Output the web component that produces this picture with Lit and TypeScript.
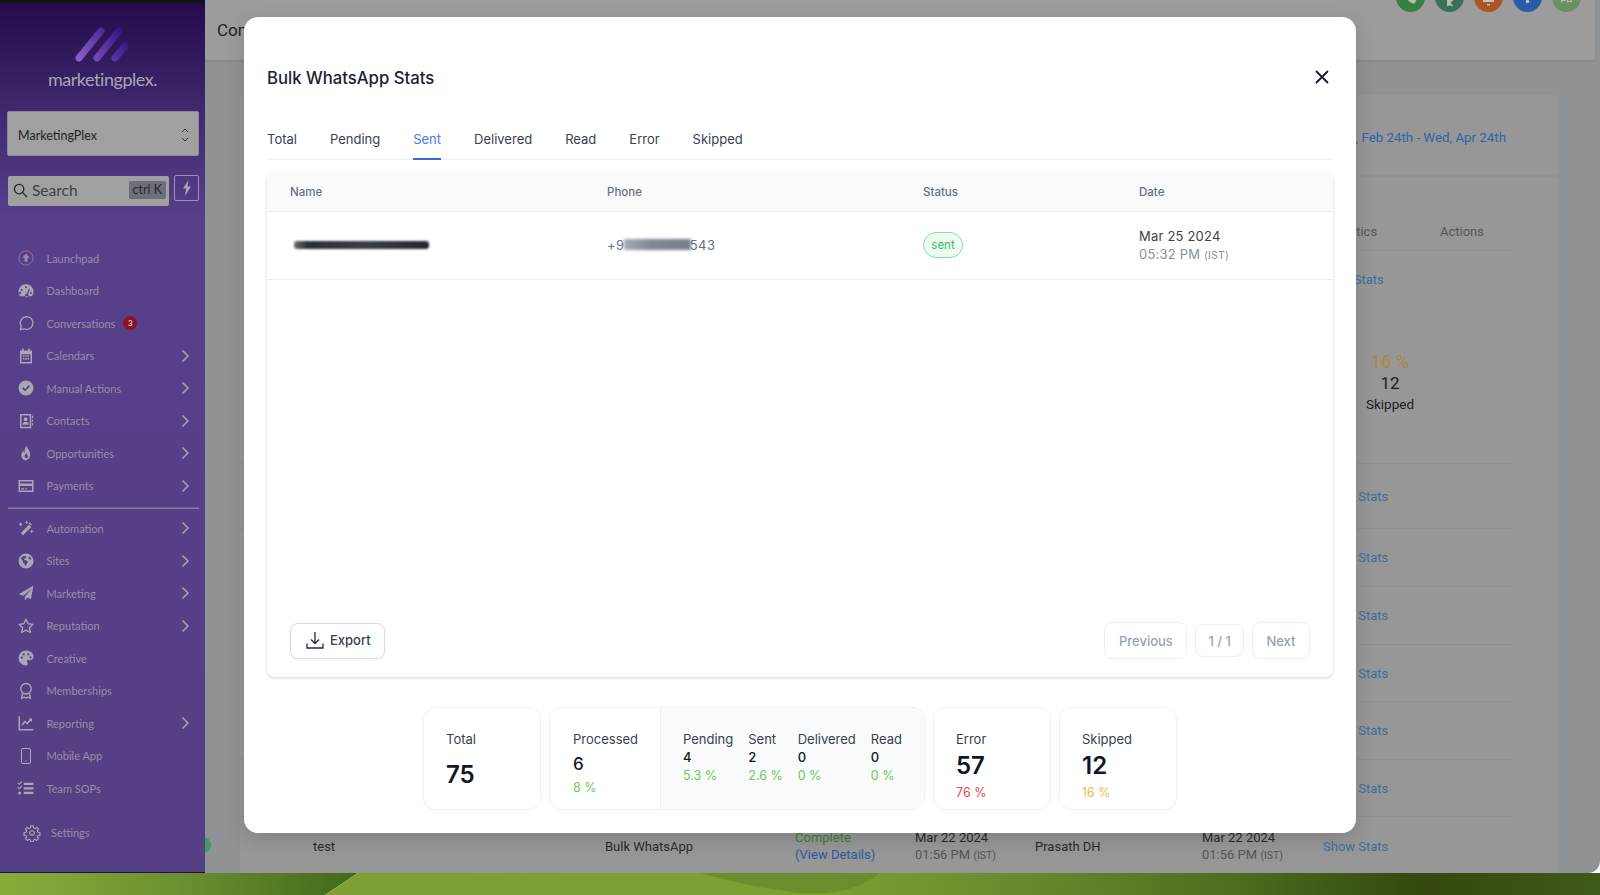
import { LitElement, html, css, svg } from 'lit';
import { customElement } from 'lit/decorators.js';

// filled / stroked glyphs for the sidebar, all in a 24 box
const icons: Record<string, unknown> = {
  launchpad: svg`<circle cx="12" cy="12" r="9.5" fill="none" stroke="currentColor" stroke-width="1.2" opacity=".6"/><path d="M12 2.5a9.5 9.5 0 0 1 8 4.5" fill="none" stroke="#a8553f" stroke-width="1.4"/><path d="M12 6l5 5.5h-3V17h-4v-5.5H7z" fill="currentColor" opacity=".75"/>`,
  dashboard: svg`<path fill-rule="evenodd" d="M12 3a10 10 0 0 0-8.6 15.1c.3.5.9.9 1.5.9h14.2c.6 0 1.2-.4 1.5-.9A10 10 0 0 0 12 3zm0 2.6a1.4 1.4 0 1 1 0 2.8 1.4 1.4 0 0 1 0-2.8zM6.4 9.2a1.4 1.4 0 1 1 0 2.8 1.4 1.4 0 0 1 0-2.8zm-1 5.5a1.4 1.4 0 1 1 0-.1zm10.500-5.600l1.500.600-2.900 6.700a2.300 2.300 0 1 1-1.500-.600zM18.600 16a1.400 1.400 0 1 1 0-2.800 1.400 1.400 0 0 1 0 2.800z" fill="currentColor"/>`,
  chat: svg`<path d="M13 3.500a8.500 8.500 0 0 0-7.400 12.700L4.300 20.800l4.800-1.100A8.500 8.500 0 1 0 13 3.500z" fill="none" stroke="currentColor" stroke-width="1.700" stroke-linejoin="round"/>`,
  calendar: svg`<path fill-rule="evenodd" d="M7 2h2v2.500h6V2h2v2.500h3v17.500H4V4.500h3zM6 9.500V20h12V9.500zM8 11h2v2H8zm3 0h2v2h-2zm3 0h2v2h-2zm-6 3.500h2v2H8zm3 0h2v2h-2zm3 0h2v2h-2z" fill="currentColor"/>`,
  check: svg`<path fill-rule="evenodd" d="M12 2a10 10 0 1 0 0 20 10 10 0 0 0 0-20zm5.300 7.600l-6.300 6.800-4.200-3.900 1.500-1.600 2.600 2.400 4.800-5.200z" fill="currentColor"/>`,
  contacts: svg`<path fill-rule="evenodd" d="M4 2.500h15v19H4zM6 4.500v15h11v-15zm5.500 2.500a2.700 2.700 0 1 1 0 5.400 2.700 2.700 0 0 1 0-5.400zM7.500 17v-1.500c0-1.600 1.800-2.300 4-2.300s4 .7 4 2.300V17zM20 5h1.500v3H20zm0 5h1.500v3H20zm0 5h1.500v3H20z" fill="currentColor"/>`,
  flame: svg`<path fill-rule="evenodd" d="M12.500 2c.5 3.500 5 6.500 5 12a6 7.500 0 0 1-11.500 3c-1-3.500 1-6 2.500-8 .2 1.300.7 2 1.500 2.500C10 8 10.500 5 12.500 2zm-.3 10c-.5 1.500-2 2.500-2 4.500a2.200 2.200 0 0 0 4.400 0c0-2-1.900-3-2.400-4.500z" fill="currentColor"/>`,
  card: svg`<path fill-rule="evenodd" d="M2 4h20v16H2zM4 6v2.500h16V6zm0 6v6h16v-6zm1.500 3h4v1.500h-4zm5.500 0h2.500v1.500H11z" fill="currentColor"/>`,
  wand: svg`<path d="M16 7.500l3 3L8 21.500l-3-3zM5 4l1 2 2 1-2 1-1 2-1-2-2-1 2-1zM13 2l.8 1.700 1.700.8-1.700.800L13 7l-.8-1.700-1.700-.800 1.700-.800zM19.500 14l.8 1.700 1.700.8-1.700.8-.8 1.700-.8-1.700-1.700-.8 1.700-.8zM17 4.500l2.800 2.800-1.500 1.500-2.800-2.800z" fill="currentColor"/>`,
  globe: svg`<path fill-rule="evenodd" d="M12 2a10 10 0 1 0 0 20 10 10 0 0 0 0-20zM5 8.500l3-3 3.500-.5 1 2-2.500 1.500-.5 2 3 .5 2 2-1.500 3-2 3-1-3-2-2-.5-2.500zm12-3l2 4-2.500.5-1.500-2.500z" fill="currentColor"/>`,
  plane: svg`<path d="M22 2L2.500 13.500l6 2.300L19 6.500 10.500 17v5l3.300-4 4.700 2z" fill="currentColor"/>`,
  star: svg`<path d="M12 3l2.800 6 6.500.8-4.800 4.400 1.300 6.500L12 17.500l-5.800 3.200 1.300-6.500-4.800-4.400 6.500-.8z" fill="none" stroke="currentColor" stroke-width="1.800" stroke-linejoin="round"/>`,
  palette: svg`<path fill-rule="evenodd" d="M12 2a10 10 0 0 0 0 20c1.700 0 2.500-1.200 2.500-2.300 0-1.500-1.200-2-1.200-3.200 0-1.100.9-1.800 2-1.800h2.500A4.700 4.700 0 0 0 22 10C22 5.500 17.500 2 12 2zM6.500 13a1.500 1.500 0 1 1 0-3 1.500 1.500 0 0 1 0 3zm2.500-4.500a1.500 1.500 0 1 1 0-3 1.500 1.500 0 0 1 0 3zm6 0a1.500 1.500 0 1 1 0-3 1.500 1.500 0 0 1 0 3zm3 4a1.500 1.500 0 1 1 0-3 1.500 1.500 0 0 1 0 3z" fill="currentColor"/>`,
  award: svg`<circle cx="12" cy="9" r="7" fill="none" stroke="currentColor" stroke-width="1.800"/><path d="M7.500 15l-1.500 7 3.500-2 2.500 1.500 2.500-1.500 3.500 2-1.500-7" fill="none" stroke="currentColor" stroke-width="1.800" stroke-linejoin="round"/>`,
  chart: svg`<path d="M3 3v18h19" fill="none" stroke="currentColor" stroke-width="2"/><path d="M6.500 15l4-5 3 2.500L19 7" fill="none" stroke="currentColor" stroke-width="2"/><path d="M15.500 6H20v4.500z" fill="currentColor"/>`,
  mobile: svg`<rect x="6" y="2" width="12" height="20" rx="2" fill="none" stroke="currentColor" stroke-width="1.400"/><circle cx="12" cy="18.500" r="1" fill="currentColor"/>`,
  tasks: svg`<path d="M9 5h13v3H9zm0 6h13v3H9zm0 6h13v3H9zM1.500 4.500l1.500 1.500L6 2.500l1 1L3 8 .5 5.500zm0 6L3 12l3-3.500 1 1L3 14 .5 11.500z" fill="currentColor"/><circle cx="3.500" cy="18.500" r="2" fill="currentColor"/>`,
  gear: svg`<path d="M10.300 2.500h3.400l.5 2.700 1.800.8 2.300-1.500 2.400 2.400-1.500 2.300.8 1.800 2.700.5v3.400l-2.700.5-.8 1.800 1.500 2.300-2.400 2.400-2.300-1.500-1.800.8-.5 2.700h-3.400l-.5-2.700-1.800-.8-2.300 1.500-2.400-2.400 1.500-2.300-.8-1.800-2.700-.5v-3.400l2.700-.5.8-1.800-1.500-2.300 2.400-2.400 2.300 1.500 1.800-.8z" fill="none" stroke="currentColor" stroke-width="1.500" stroke-linejoin="round"/><circle cx="12" cy="12" r="3" fill="none" stroke="currentColor" stroke-width="1.500"/>`,
};

const navTop = [
  { label: 'Launchpad', icon: 'launchpad' },
  { label: 'Dashboard', icon: 'dashboard' },
  { label: 'Conversations', icon: 'chat', badge: '3' },
  { label: 'Calendars', icon: 'calendar', more: true },
  { label: 'Manual Actions', icon: 'check', more: true },
  { label: 'Contacts', icon: 'contacts', more: true },
  { label: 'Opportunities', icon: 'flame', more: true },
  { label: 'Payments', icon: 'card', more: true },
];

const navBottom = [
  { label: 'Automation', icon: 'wand', more: true },
  { label: 'Sites', icon: 'globe', more: true },
  { label: 'Marketing', icon: 'plane', more: true },
  { label: 'Reputation', icon: 'star', more: true },
  { label: 'Creative', icon: 'palette' },
  { label: 'Memberships', icon: 'award' },
  { label: 'Reporting', icon: 'chart', more: true },
  { label: 'Mobile App', icon: 'mobile' },
  { label: 'Team SOPs', icon: 'tasks' },
];

const rowHeights = [65, 58, 58, 57, 58, 57, 59];
const tabs = ['Total', 'Pending', 'Sent', 'Delivered', 'Read', 'Error', 'Skipped'];
const processed = [
  { label: 'Pending', value: '4', pct: '5.3 %' },
  { label: 'Sent', value: '2', pct: '2.6 %' },
  { label: 'Delivered', value: '0', pct: '0 %' },
  { label: 'Read', value: '0', pct: '0 %' },
];
// header buttons, cut off by the top of the window so only the bottom of each glyph shows
const dots = [
  { color: '#37803f', glyph: svg`<path d="M12 17h8.500l-2 3.500c-2 .5-4.500-.8-6.500-3.500z" fill="#b5bdb5"/>` },
  { color: '#3b7059', glyph: svg`<path d="M12 17h2.500v6H12zm2.500 0h4l-3 3 3 3h-2.500l-3-3z" fill="#b5bdb5"/>` },
  { color: '#ad5420', glyph: svg`<path d="M9 17h11v2H9zM13 21h3v1.500h-3z" fill="#c9c2b8"/>` },
  { color: '#2b5ca6', glyph: svg`<circle cx="14.500" cy="18.500" r="1.700" fill="#c4cad4"/>` },
  { color: '#6c8f62', glyph: svg`<path d="M9.500 17h4v1h-3v1.500h-1.500zM15 17h1.200v1h2.200v-1h1.200v2.500h-1.200v-.7h-2.200v.7H15z" fill="#b9c2b4"/>` },
];

@customElement('app-root')
export class AppRoot extends LitElement {
  static styles = css`
    :host {
      display: block;
      position: relative;
      width: 1600px;
      height: 895px;
      overflow: hidden;
      font-family: Inter, 'Liberation Sans', sans-serif;
    }
    .shell { display: flex; height: 873px; }
    .wall { display: block; width: 1600px; height: 22px; }

    /* sidebar */
    .sidebar {
      position: relative;
      z-index: 2;
      width: 205px;
      flex: none;
      display: flex;
      flex-direction: column;
      box-sizing: border-box;
      border-top: 3px solid #14121a;
      border-bottom: 1px solid #1d1638;
      background: linear-gradient(180deg, #240c4c 0, #3f2a6f 110px, #56408a 215px, #554085 100%);
      font-family: Lato, 'Open Sans', sans-serif;
    }
    .brand { height: 108px; display: flex; flex-direction: column; align-items: center; }
    .brand svg { margin-top: 24px; }
    .brand span { font-size: 18px; color: #aaa5b3; letter-spacing: -0.45px; line-height: 22px; margin-top: 5px; }
    .org {
      margin: 0 6px 0 7px;
      height: 45px;
      flex: none;
      box-sizing: border-box;
      display: flex;
      align-items: center;
      justify-content: space-between;
      padding: 3px 9px 0 10px;
      background: #a0a0a1;
      border: 1px solid #8f84a5;
      border-radius: 2px;
      color: #232326;
      font-size: 12.5px;
    }
    .search-row { display: flex; gap: 5px; margin: 20px 6px 0 8px; height: 30px; flex: none; }
    .search {
      flex: 1;
      display: flex;
      align-items: center;
      gap: 4px;
      padding: 0 3px 2px 5px;
      background: #a0a0a1;
      border-radius: 2px;
      color: #3f3f44;
      font-size: 15.5px;
    }
    .search span { flex: 1; }
    .search kbd {
      font: 12.5px Lato, sans-serif;
      background: #6c7078;
      color: #26262a;
      border-radius: 2px;
      padding: 2px 4px;
      height: 14px;
      line-height: 14px;
    }
    .bolt {
      width: 25px;
      height: 26px;
      box-sizing: border-box;
      margin-top: -1px;
      border: 1px solid #9d93b3;
      border-radius: 2px;
      display: flex;
      align-items: center;
      justify-content: center;
      color: #a8a3b5;
    }
    nav { margin-top: 36px; }
    .item {
      height: 32.5px;
      display: flex;
      align-items: center;
      padding: 0 16px 0 17px;
      font-size: 11px;
      color: #968ea6;
    }
    .item svg.ico { width: 18px; height: 18px; margin-right: 11.5px; color: #aaa6b4; flex: none; }
    .item .chev { margin-left: auto; color: #aaa6b4; }
    .badge {
      width: 14px;
      height: 14px;
      margin-left: 8px;
      border-radius: 50%;
      background: #8e1220;
      color: #cfc9c9;
      font-size: 8px;
      font-weight: 700;
      line-height: 14px;
      text-align: center;
    }
    .divider { height: 1px; margin: 5px 6px 3px 8px; background: #8378a0; border-top: 1px solid #6f6293; }
    .settings { margin-top: 12px; padding-left: 23px; }
    .settings svg.ico { margin-right: 10px; }

    /* dimmed page behind the dialog */
    .main {
      flex: 1;
      min-width: 0;
      background: #8f9395;
      border-bottom-right-radius: 12px;
      overflow: hidden;
      font-family: Roboto, 'Liberation Sans', sans-serif;
      font-size: 13px;
      color: #2a2a2c;
    }
    .topbar {
      height: 60px;
      margin-right: 5px;
      box-sizing: border-box;
      padding-left: 12px;
      display: flex;
      justify-content: space-between;
      align-items: center;
      background: #9c9c9d;
      box-shadow: 0 1px 2px rgba(0, 0, 0, 0.1);
      font-size: 17px;
      color: #222;
    }
    .dots { display: flex; gap: 10px; align-self: flex-start; margin: -17px 14px 0 0; }
    .dot { width: 29px; height: 29px; border-radius: 50%; flex: none; display: block; }
    .panel {
      margin: 35px 42px 0 35px;
      background: #979797;
      border-radius: 4px 4px 0 0;
      height: 790px;
    }
    .range {
      height: 82px;
      box-sizing: border-box;
      padding: 4px 52px 0 0;
      display: flex;
      align-items: center;
      justify-content: flex-end;
      border-bottom: 2px solid #929292;
      color: #2d62ae;
      font-size: 13.3px;
    }
    .table { width: 1272px; }
    .grid {
      display: grid;
      grid-template-columns: 292px 190px 120px 120px 167px 121px 117px 72px;
      padding-left: 73px;
      border-bottom: 1px solid #8f9191;
      box-sizing: border-box;
    }
    .head { height: 74px; padding-top: 45px; color: #565656; line-height: 20px; }
    .row { align-items: center; line-height: 17px; }
    .first { height: 213px; align-items: start; padding-top: 21px; }
    .first .link { margin-left: -4.500px; }
    .first .skip { grid-column: 8; margin-left: -80px; }
    .skip { text-align: center; width: 60px; margin-top: 79px; font-size: 13.5px; line-height: 21.500px; color: #1c1c1e; }
    .skip b { display: block; font-weight: 400; font-size: 18px; color: #a9883f; }
    .skip i { display: block; font-style: normal; font-size: 17px; }
    .link { color: #3c6f9f; }
    .stats-col { grid-column: 7; }
    .green { color: #3f7f34; }
    .blue { color: #2c5a9e; }
    .muted { color: #555; }
    .muted small { font-size: 10.500px; }

    .chat-bubble {
      position: absolute;
      left: 195px;
      top: 837px;
      width: 16px;
      height: 16px;
      border-radius: 50%;
      background: #3f9a68;
      z-index: 1;
    }

    /* dialog */
    .modal {
      position: absolute;
      left: 244px;
      top: 17px;
      width: 1112px;
      height: 816px;
      box-sizing: border-box;
      z-index: 3;
      padding: 49px 23px 0;
      background: #fff;
      border-radius: 14px;
      box-shadow: 0 6px 20px rgba(0, 0, 0, 0.15);
      display: flex;
      flex-direction: column;
      color: #111827;
    }
    .title-row { display: flex; justify-content: space-between; align-items: center; height: 24px; }
    .title-row h2 { margin: 0; font-size: 16.7px; font-weight: 500; color: #1a2233; }
    .close { margin: -3px 4px 0 0; color: #101a33; display: flex; }
    .tabs { display: flex; gap: 33px; margin-top: 37px; border-bottom: 1px solid #eef0f3; flex: none; }
    .tab { font-size: 13px; line-height: 24px; padding-bottom: 7px; color: #374151; margin-bottom: -1px; border-bottom: 2px solid transparent; height: 24px; }
    .tab.on { color: #4f75f0; border-bottom-color: #3366e8; }
    .card {
      margin-top: 12px;
      height: 505px;
      flex: none;
      display: flex;
      flex-direction: column;
      border-radius: 8px;
      box-shadow: 0 1px 3px rgba(16, 24, 40, 0.18);
      overflow: hidden;
    }
    .tr { display: grid; grid-template-columns: 317px 316px 216px 1fr; padding-left: 23px; align-items: center; box-sizing: border-box; flex: none; border-bottom: 1px solid #eceef2; }
    .thead { height: 40px; background: #f9fafb; font-size: 11.5px; font-weight: 500; color: #667085; }
    .tbody { height: 68px; padding-bottom: 2px; font-size: 13px; color: #667085; }
    .smudge { width: 135px; height: 8px; margin-left: 4px; background: linear-gradient(90deg, #6d7176 0, #2b2f33 10%, #3a3e42 55%, #23272b 100%); border-radius: 3px; filter: blur(1.200px); }
    .phone { display: flex; align-items: center; letter-spacing: 0.5px; }
    .phone i { width: 67px; height: 11px; margin: 0 -1px; background: linear-gradient(90deg, #a5acb8 0, #7f8794 40%, #767e8c 100%); filter: blur(1.500px); }
    .pill {
      justify-self: start;
      width: 40px;
      height: 26px;
      box-sizing: border-box;
      border: 1px solid #86e0a4;
      border-radius: 13px;
      background: #edfcf2;
      color: #3fb56e;
      font-size: 11.5px;
      line-height: 24px;
      text-align: center;
    }
    .when { margin-top: 2px; line-height: 18px; color: #3a3f4a; letter-spacing: 0.2px; }
    .when div + div { color: #8a8f98; }
    .when small { font-size: 10.500px; }
    .foot { margin-top: auto; display: flex; justify-content: space-between; align-items: center; padding: 0 23px 18px; }
    .btn {
      height: 37px;
      box-sizing: border-box;
      border: 1px solid #eceef2;
      border-radius: 8px;
      padding: 0 13.500px;
      display: flex;
      align-items: center;
      font-size: 13px;
      font-weight: 500;
      color: #98a2b3;
    }
    .export { width: 95px; height: 36px; padding: 0 0 1px 15px; gap: 6px; border-color: #d8dbe3; color: #344054; box-shadow: 0 1px 2px rgba(16, 24, 40, 0.05); }
    .pager { display: flex; gap: 8px; align-items: center; }
    .pager .count { height: 33px; padding: 0 12px; }
    .stats { display: flex; justify-content: center; gap: 8px; margin-top: 30px; height: 103px; flex: none; }
    .stat {
      box-sizing: border-box;
      width: 118px;
      padding: 21px 0 0 22px;
      border: 1px solid #eef0f3;
      border-radius: 12px;
      font-size: 13px;
      color: #374151;
      line-height: 20px;
    }
    .stat.group { width: 376px; padding: 0; display: flex; overflow: hidden; }
    .group .lead { width: 111px; flex: none; box-sizing: border-box; padding: 21px 0 0 23px; border-right: 1px solid #eef0f3; }
    .group .rest { flex: 1; display: flex; gap: 15px; padding: 21px 0 0 22px; background: #f9fafb; }
    .num { color: #101828; font-weight: 600; }
    .big { font-size: 24px; line-height: 32px; margin-top: 1px; }
    .total { margin-top: 10px; }
    .mid { font-size: 17px; line-height: 24px; margin-top: 3px; font-weight: 500; }
    .small { font-size: 13px; font-weight: 500; line-height: 17px; }
    .pct { font-size: 12.5px; line-height: 19px; color: #66cc55; }
    .lead .pct { margin-top: 2px; }
    .err { color: #e5484d; margin-top: 1px; }
    .warn { color: #eeb84e; margin-top: 1px; }
  `;

  private chevron() {
    return html`<svg class="chev" width="8" height="14" viewBox="0 0 8 14"><path d="M1.500 1.500L7 7l-5.500 5.500" fill="none" stroke="currentColor" stroke-width="1.500"/></svg>`;
  }

  private navItem(n: { label: string; icon: string; badge?: string; more?: boolean }, cls = '') {
    return html`<div class="item ${cls}">
      <svg class="ico" viewBox="0 0 24 24">${icons[n.icon]}</svg>
      <span>${n.label}</span>
      ${n.badge ? html`<span class="badge">${n.badge}</span>` : ''}
      ${n.more ? this.chevron() : ''}
    </div>`;
  }

  private sidebar() {
    return html`<aside class="sidebar">
      <div class="brand">
        <svg width="56" height="36" viewBox="0 0 56 36">
          <defs>
            <linearGradient id="lg" gradientUnits="userSpaceOnUse" x1="4" y1="32" x2="44" y2="4">
              <stop offset="0" stop-color="#8660c4" /><stop offset="1" stop-color="#3a158a" />
            </linearGradient>
          </defs>
          <path d="M4 31L26 4M22 31L44 4M40 31L50 19" stroke="url(#lg)" stroke-width="7" stroke-linecap="round" fill="none" />
        </svg>
        <span>marketingplex.</span>
      </div>
      <div class="org">
        <span>MarketingPlex</span>
        <svg width="8" height="16" viewBox="0 0 8 16"><path d="M1 5l3-3 3 3M1 11l3 3 3-3" fill="none" stroke="#333" stroke-width="1"/></svg>
      </div>
      <div class="search-row">
        <div class="search">
          <svg width="15" height="15" viewBox="0 0 16 16"><circle cx="6.500" cy="6.500" r="5" fill="none" stroke="#26262a" stroke-width="1.400"/><path d="M10 10l5 5" stroke="#26262a" stroke-width="1.500"/></svg>
          <span>Search</span>
          <kbd>ctrl K</kbd>
        </div>
        <div class="bolt">
          <svg width="10" height="16" viewBox="0 0 10 16"><path d="M6.500 0L1 8.500h3.200L3 16l6-9.500H5.500z" fill="currentColor"/></svg>
        </div>
      </div>
      <nav>
        ${navTop.map((n) => this.navItem(n))}
        <div class="divider"></div>
        ${navBottom.map((n) => this.navItem(n))}
        ${this.navItem({ label: 'Settings', icon: 'gear' }, 'settings')}
      </nav>
    </aside>`;
  }

  private backdrop() {
    return html`<main class="main">
      <div class="topbar">
        <span>Conversations</span>
        <div class="dots">
          ${dots.map((d) => html`<svg class="dot" style="background:${d.color}" viewBox="0 0 29 29">${d.glyph}</svg>`)}
        </div>
      </div>
      <div class="panel">
        <div class="range">Sat, Feb 24th - Wed, Apr 24th</div>
        <div class="table">
          <div class="grid head">
            <span class="stats-col">Statistics</span><span>Actions</span>
          </div>
          <div class="grid first">
            <span class="link stats-col">Show Stats</span>
            <div class="skip"><b>16 %</b><i>12</i>Skipped</div>
          </div>
          ${rowHeights.map((h, i) =>
            i < rowHeights.length - 1
              ? html`<div class="grid row" style="height:${h}px"><span class="link stats-col">Show Stats</span></div>`
              : html`<div class="grid row" style="height:${h}px">
                  <span>test</span>
                  <span>Bulk WhatsApp</span>
                  <span class="green">Complete<br /><span class="blue">(View Details)</span></span>
                  <span>Mar 22 2024<br /><span class="muted">01:56 PM <small>(IST)</small></span></span>
                  <span>Prasath DH</span>
                  <span>Mar 22 2024<br /><span class="muted">01:56 PM <small>(IST)</small></span></span>
                  <span class="link">Show Stats</span>
                </div>`
          )}
        </div>
      </div>
    </main>`;
  }

  private dialog() {
    return html`<section class="modal">
      <div class="title-row">
        <h2>Bulk WhatsApp Stats</h2>
        <div class="close">
          <svg width="14" height="14" viewBox="0 0 14 14"><path d="M1.500 1.500l11 11M12.500 1.500l-11 11" stroke="currentColor" stroke-width="1.800" stroke-linecap="round"/></svg>
        </div>
      </div>
      <div class="tabs">${tabs.map((t) => html`<div class="tab ${t === 'Sent' ? 'on' : ''}">${t}</div>`)}</div>
      <div class="card">
        <div class="tr thead"><span>Name</span><span>Phone</span><span>Status</span><span>Date</span></div>
        <div class="tr tbody">
          <div class="smudge"></div>
          <div class="phone">+9<i></i>543</div>
          <div class="pill">sent</div>
          <div class="when"><div>Mar 25 2024</div><div>05:32 PM <small>(IST)</small></div></div>
        </div>
        <div class="foot">
          <div class="btn export">
            <svg width="18" height="18" viewBox="0 0 18 18"><path d="M9 1v11M5 8.500L9 12.500l4-4M1 12.500V17h16v-4.500" fill="none" stroke="#1f2a44" stroke-width="1.300"/></svg>
            Export
          </div>
          <div class="pager">
            <div class="btn">Previous</div>
            <div class="btn count">1 / 1</div>
            <div class="btn">Next</div>
          </div>
        </div>
      </div>
      <div class="stats">
        <div class="stat"><div>Total</div><div class="num big total">75</div></div>
        <div class="stat group">
          <div class="lead"><div>Processed</div><div class="num mid">6</div><div class="pct">8 %</div></div>
          <div class="rest">
            ${processed.map(
              (p) => html`<div><div>${p.label}</div><div class="num small">${p.value}</div><div class="pct">${p.pct}</div></div>`
            )}
          </div>
        </div>
        <div class="stat"><div>Error</div><div class="num big">57</div><div class="pct err">76 %</div></div>
        <div class="stat"><div>Skipped</div><div class="num big">12</div><div class="pct warn">16 %</div></div>
      </div>
    </section>`;
  }

  private wallpaper() {
    return html`<svg class="wall" viewBox="0 0 1600 22" preserveAspectRatio="none">
      <defs>
        <linearGradient id="wl" x1="0" y1="0" x2="1" y2="0">
          <stop offset="0" stop-color="#88ad3b" /><stop offset=".5" stop-color="#6b9030" /><stop offset="1" stop-color="#3f6a1c" />
        </linearGradient>
        <linearGradient id="wr" gradientUnits="userSpaceOnUse" x1="325" y1="0" x2="1600" y2="0">
          <stop offset="0" stop-color="#7d9f34" /><stop offset=".4" stop-color="#7c9e33" /><stop offset=".55" stop-color="#668a2c" />
          <stop offset=".7" stop-color="#4f7020" /><stop offset=".86" stop-color="#33490f" /><stop offset="1" stop-color="#405a1a" />
        </linearGradient>
      </defs>
      <path d="M0 0H358L325 22H0z" fill="url(#wl)" />
      <path d="M358 0H1600V22H325z" fill="url(#wr)" />
      <path d="M700 0Q760 16 800 20Q850 24 880 0z" fill="#5a7b24" opacity=".45" />
    </svg>`;
  }

  render() {
    return html`
      <div class="shell">${this.sidebar()}${this.backdrop()}</div>
      ${this.wallpaper()}
      <div class="chat-bubble"></div>
      ${this.dialog()}
    `;
  }
}
